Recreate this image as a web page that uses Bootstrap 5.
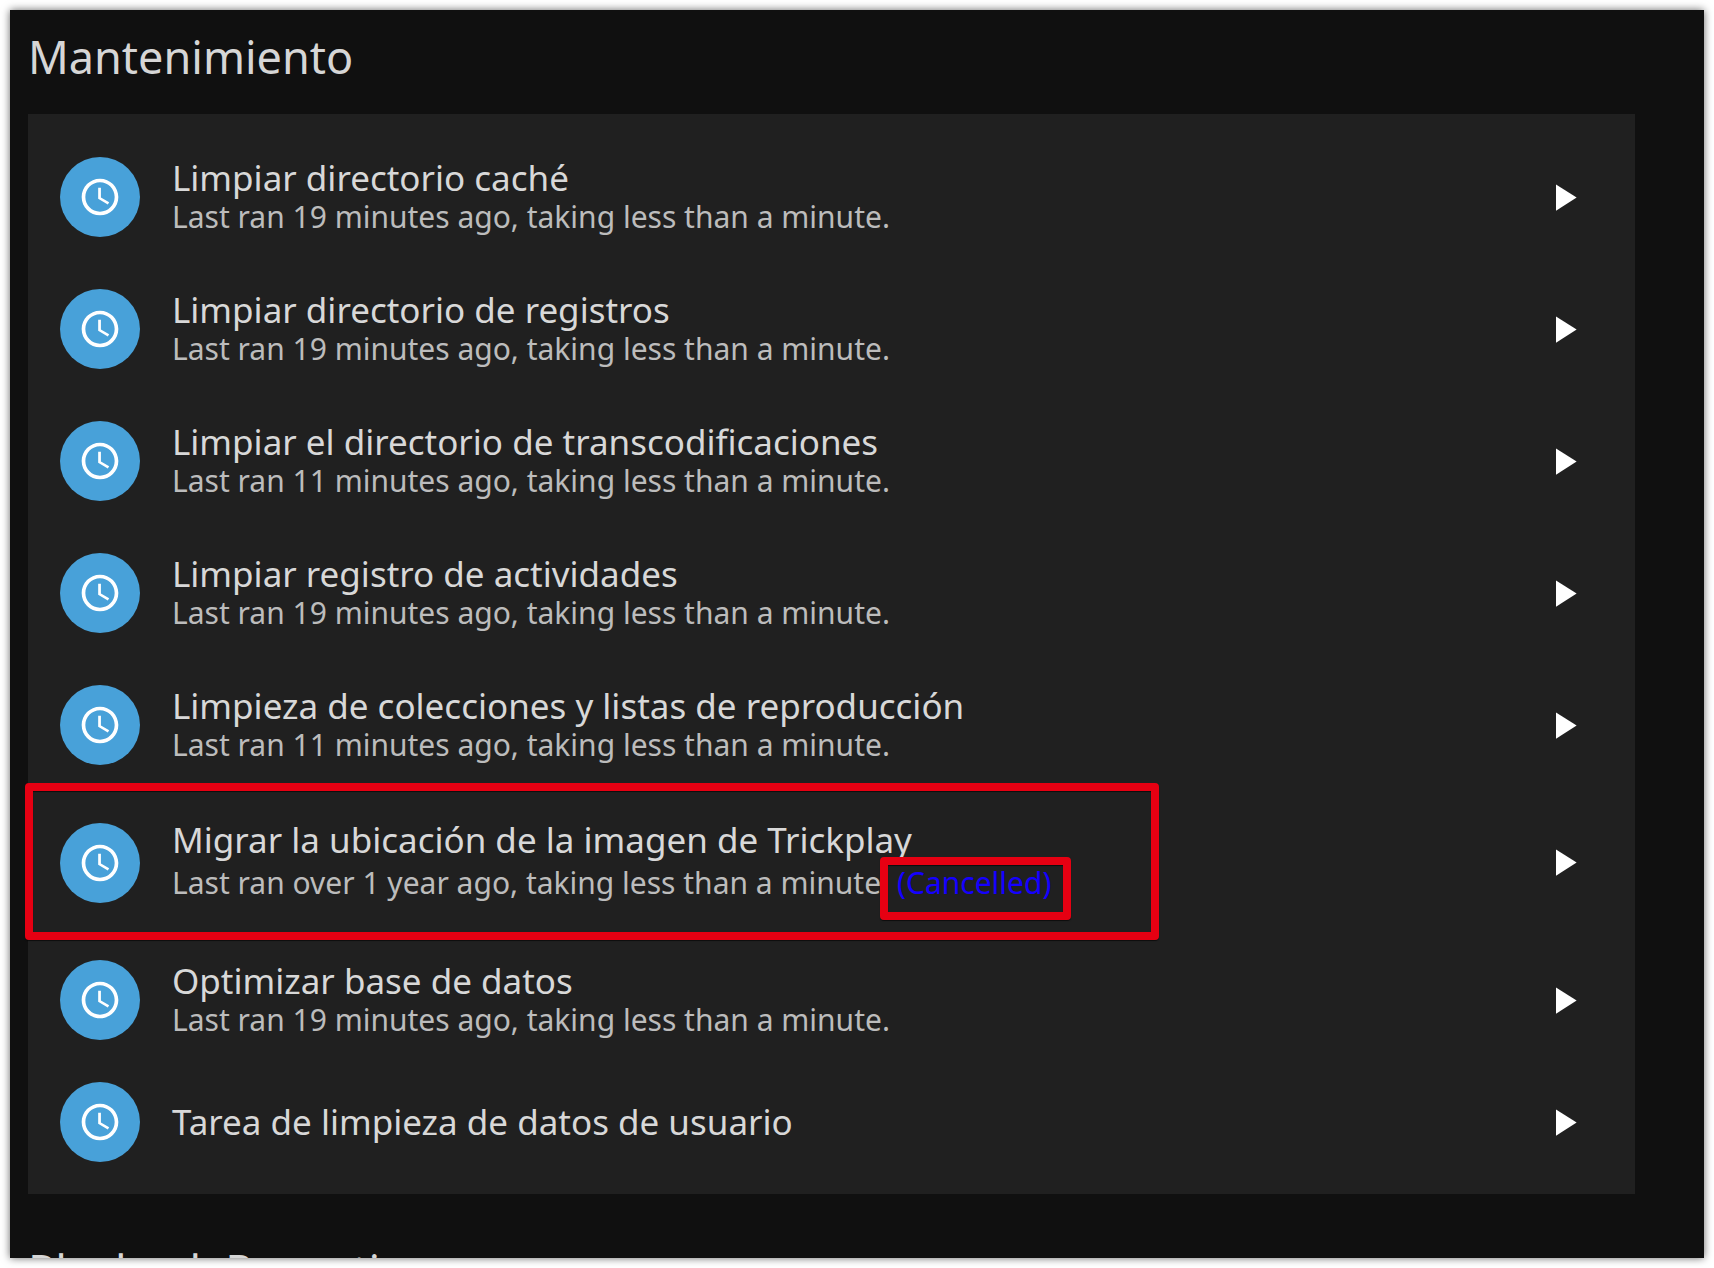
<!DOCTYPE html>
<html lang="es">
<head>
<meta charset="utf-8">
<meta name="viewport" content="width=device-width, initial-scale=1">
<title>Mantenimiento</title>
<link href="https://cdn.jsdelivr.net/npm/bootstrap@5.3.0/dist/css/bootstrap.min.css" rel="stylesheet">
<style>
  body { background: #fff; font-family: "Noto Sans", sans-serif; padding: 10px; }
  .task-page { height: calc(100vh - 20px); background: #101010; box-shadow: 0 0 8px rgba(0, 0, 0, .6); padding: 20px 69px 0 18px; }
  .section-title { font-size: 45px; line-height: 54px; font-weight: 400; color: #d6d6d6; margin-bottom: 30px; }
  .task-list { background: #202020; padding: 17px 35px 16px 32px; margin-bottom: 50px; }
  .task-row { min-height: 132px; gap: 32px; }
  .task-row.flagged { min-height: 143px; }
  .task-row.compact { min-height: 112px; }
  .task-icon { width: 80px; height: 80px; background: #48a1d9; color: #fff; }
  .task-icon svg { width: 44px; height: 44px; fill: currentColor; display: block; }
  .task-run svg { width: 45px; height: 45px; fill: currentColor; display: block; }
  .task-name { font-size: 35px; line-height: 40px; font-weight: 400; color: #d8d8d8; }
  .task-info { font-size: 30px; line-height: 38px; color: #bcbcbc; }
  .flagged .task-info { line-height: 46px; }
  .task-run { color: #fff; background: none; border: 0; padding: 14px; }
  .task-state { color: #1500ff; }
  .marker { border: 8px solid #e60012; border-radius: 4px; pointer-events: none; box-shadow: 0 1px 1px rgba(0, 0, 0, .6), inset 0 1px 1px rgba(0, 0, 0, .6); }
  .marker-row { left: -35px; top: -8px; bottom: -6px; width: 1134px; }
  .marker-state { left: -17px; right: -20px; top: -5px; height: 63px; }
</style>
<script src="https://cdn.jsdelivr.net/npm/bootstrap@5.3.0/dist/js/bootstrap.bundle.min.js"></script>
</head>
<body>
<svg class="d-none" aria-hidden="true">
  <symbol id="clock" viewBox="0 0 24 24"><path d="M11.99 2C6.47 2 2 6.48 2 12s4.47 10 9.99 10C17.52 22 22 17.52 22 12S17.52 2 11.99 2zM12 20c-4.42 0-8-3.58-8-8s3.58-8 8-8 8 3.58 8 8-3.58 8-8 8z"/><path d="M12.5 7H11v6l5.25 3.15.75-1.23-4.5-2.67z"/></symbol>
  <symbol id="play" viewBox="0 0 24 24"><path d="M8 5v14l11-7z"/></symbol>
</svg>
<main class="task-page overflow-hidden">
  <h1 class="section-title">Mantenimiento</h1>
  <div class="task-list">
    <div class="task-row d-flex align-items-center">
      <span class="task-icon rounded-circle d-flex align-items-center justify-content-center flex-shrink-0"><svg><use href="#clock"/></svg></span>
      <div class="flex-grow-1"><h2 class="task-name m-0">Limpiar directorio caché</h2><div class="task-info">Last ran 19 minutes ago, taking less than a minute.</div></div>
      <button class="task-run" type="button" aria-label="Ejecutar"><svg><use href="#play"/></svg></button>
    </div>
    <div class="task-row d-flex align-items-center">
      <span class="task-icon rounded-circle d-flex align-items-center justify-content-center flex-shrink-0"><svg><use href="#clock"/></svg></span>
      <div class="flex-grow-1"><h2 class="task-name m-0">Limpiar directorio de registros</h2><div class="task-info">Last ran 19 minutes ago, taking less than a minute.</div></div>
      <button class="task-run" type="button" aria-label="Ejecutar"><svg><use href="#play"/></svg></button>
    </div>
    <div class="task-row d-flex align-items-center">
      <span class="task-icon rounded-circle d-flex align-items-center justify-content-center flex-shrink-0"><svg><use href="#clock"/></svg></span>
      <div class="flex-grow-1"><h2 class="task-name m-0">Limpiar el directorio de transcodificaciones</h2><div class="task-info">Last ran 11 minutes ago, taking less than a minute.</div></div>
      <button class="task-run" type="button" aria-label="Ejecutar"><svg><use href="#play"/></svg></button>
    </div>
    <div class="task-row d-flex align-items-center">
      <span class="task-icon rounded-circle d-flex align-items-center justify-content-center flex-shrink-0"><svg><use href="#clock"/></svg></span>
      <div class="flex-grow-1"><h2 class="task-name m-0">Limpiar registro de actividades</h2><div class="task-info">Last ran 19 minutes ago, taking less than a minute.</div></div>
      <button class="task-run" type="button" aria-label="Ejecutar"><svg><use href="#play"/></svg></button>
    </div>
    <div class="task-row d-flex align-items-center">
      <span class="task-icon rounded-circle d-flex align-items-center justify-content-center flex-shrink-0"><svg><use href="#clock"/></svg></span>
      <div class="flex-grow-1"><h2 class="task-name m-0">Limpieza de colecciones y listas de reproducción</h2><div class="task-info">Last ran 11 minutes ago, taking less than a minute.</div></div>
      <button class="task-run" type="button" aria-label="Ejecutar"><svg><use href="#play"/></svg></button>
    </div>
    <div class="task-row flagged d-flex align-items-center position-relative">
      <span class="task-icon rounded-circle d-flex align-items-center justify-content-center flex-shrink-0"><svg><use href="#clock"/></svg></span>
      <div class="flex-grow-1"><h2 class="task-name m-0">Migrar la ubicación de la imagen de Trickplay</h2><div class="task-info">Last ran over 1 year ago, taking less than a minute. <span class="task-state position-relative">(Cancelled)<span class="marker marker-state position-absolute"></span></span></div></div>
      <button class="task-run" type="button" aria-label="Ejecutar"><svg><use href="#play"/></svg></button>
      <span class="marker marker-row position-absolute"></span>
    </div>
    <div class="task-row d-flex align-items-center">
      <span class="task-icon rounded-circle d-flex align-items-center justify-content-center flex-shrink-0"><svg><use href="#clock"/></svg></span>
      <div class="flex-grow-1"><h2 class="task-name m-0">Optimizar base de datos</h2><div class="task-info">Last ran 19 minutes ago, taking less than a minute.</div></div>
      <button class="task-run" type="button" aria-label="Ejecutar"><svg><use href="#play"/></svg></button>
    </div>
    <div class="task-row compact d-flex align-items-center">
      <span class="task-icon rounded-circle d-flex align-items-center justify-content-center flex-shrink-0"><svg><use href="#clock"/></svg></span>
      <div class="flex-grow-1"><h2 class="task-name m-0">Tarea de limpieza de datos de usuario</h2></div>
      <button class="task-run" type="button" aria-label="Ejecutar"><svg><use href="#play"/></svg></button>
    </div>
  </div>
  <h1 class="section-title">Playback Reporting</h1>
</main>
</body>
</html>
